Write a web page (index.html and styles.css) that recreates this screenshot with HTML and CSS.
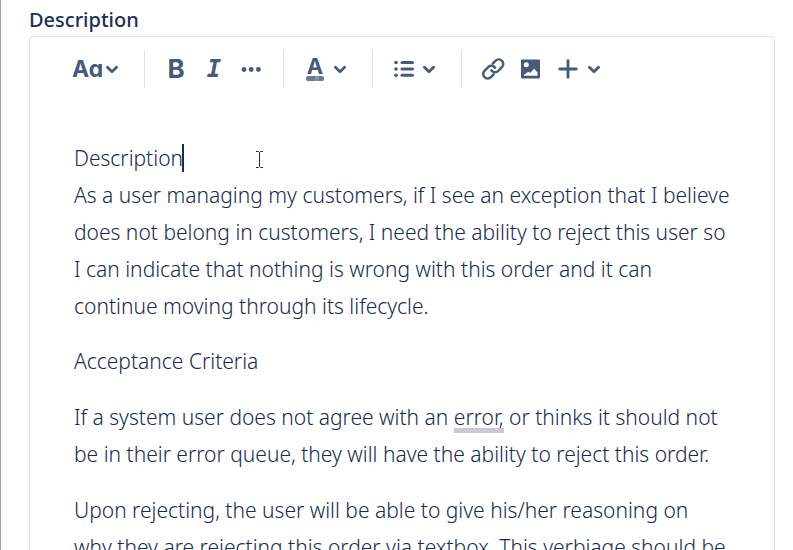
FILE: index.html
```html
<!DOCTYPE html>
<html lang="en">
<head>
<meta charset="utf-8">
<title>Description</title>
<link rel="stylesheet" href="styles.css">
</head>
<body>
<svg class="defs" aria-hidden="true">
  <symbol id="chevron" viewBox="0 0 14 14"><path d="M2.400 5.300 7 9.700l4.600-4.400" fill="none" stroke="currentColor" stroke-width="2.800" stroke-linecap="round" stroke-linejoin="round"/></symbol>
</svg>
<main class="panel">
  <h1 class="label" id="field-label">Description</h1>
  <section class="editor">
    <div class="toolbar" role="toolbar" aria-label="Formatting">
      <div class="group">
        <button class="tool menu styles" type="button" aria-label="Text styles"><span class="glyph aa">Aa</span><svg class="chevron"><use href="#chevron"/></svg></button>
      </div>
      <div class="group">
        <button class="tool" type="button" aria-label="Bold"><span class="glyph bold">B</span></button>
        <button class="tool" type="button" aria-label="Italic"><span class="glyph italic">I</span></button>
        <button class="tool" type="button" aria-label="More formatting"><svg class="icon" viewBox="0 0 24 24" fill="currentColor"><circle cx="4" cy="12.500" r="2.400"/><circle cx="11.200" cy="12.500" r="2.400"/><circle cx="18.400" cy="12.500" r="2.400"/></svg></button>
      </div>
      <div class="group">
        <button class="tool menu" type="button" aria-label="Text color"><span class="color"><span class="glyph letter">A</span><span class="swatch"></span></span><svg class="chevron"><use href="#chevron"/></svg></button>
      </div>
      <div class="group">
        <button class="tool menu" type="button" aria-label="Lists"><svg class="icon" viewBox="0 0 24 24" fill="currentColor"><circle cx="4" cy="5.500" r="1.800"/><circle cx="4" cy="12" r="1.800"/><circle cx="4" cy="18.300" r="1.800"/><rect x="8.500" y="4" width="13.500" height="3" rx="1.500"/><rect x="8.500" y="10.500" width="13.500" height="3" rx="1.500"/><rect x="8.500" y="16.800" width="13.500" height="3" rx="1.500"/></svg><svg class="chevron"><use href="#chevron"/></svg></button>
      </div>
      <div class="group">
        <button class="tool" type="button" aria-label="Link"><svg class="icon" viewBox="0 0 24 24" fill="none" stroke="currentColor" stroke-width="2.500" stroke-linecap="round"><path d="M10.400 13.200a4.400 4.400 0 0 0 6.600.9l3.900-3.900a4.500 4.500 0 0 0-6.400-6.400l-2.700 2.700"/><path d="M14 10.800a4.400 4.400 0 0 0-6.600-.9l-3.900 3.900a4.500 4.500 0 0 0 6.400 6.400l2.700-2.700"/></svg></button>
        <button class="tool" type="button" aria-label="Image"><svg class="icon" viewBox="0 0 24 24"><path fill="currentColor" fill-rule="evenodd" d="M3 2.500h17a1 1 0 0 1 1 1v17a1 1 0 0 1-1 1H3a1 1 0 0 1-1-1v-17a1 1 0 0 1 1-1ZM7.300 5.300a2.500 2.500 0 1 0 0 5a2.500 2.500 0 0 0 0-5ZM5 18.800h13.500v-3.300l-3.300-3.700-4.200 4.300-1.700-1.300L5 17.800Z"/></svg></button>
        <button class="tool menu" type="button" aria-label="Insert"><svg class="icon" viewBox="0 0 24 24" fill="none" stroke="currentColor" stroke-width="2.800" stroke-linecap="round"><path d="M11 3.700v16.600M2.700 12h16.600"/></svg><svg class="chevron"><use href="#chevron"/></svg></button>
      </div>
    </div>
    <div class="content" role="textbox" aria-multiline="true" aria-labelledby="field-label">
      <p>Description<span class="caret"></span><svg class="pointer" viewBox="0 0 9 17" fill="none" stroke="#172b4d"><path d="M1 .5h2.500l1 1 1-1H8M4.500 1.500v14M1 16.500h2.500l1-1 1 1H8"/></svg><br>As a user managing my customers, if I see an exception that I believe<br>does not belong in customers, I need the ability to reject this user so<br>I can indicate that nothing is wrong with this order and it can<br>continue moving through its lifecycle.</p>
      <p>Acceptance Criteria</p>
      <p>If a system user does not agree with an <span class="hint">error,</span> or thinks it should not<br>be in their error queue, they will have the ability to reject this order.</p>
      <p>Upon rejecting, the user will be able to give his/her reasoning on<br>why they are rejecting this order via textbox. This verbiage should be</p>
    </div>
  </section>
</main>
</body>
</html>
```
FILE: styles.css
```css
* { box-sizing: border-box; }

html, body { height: 100%; }

body {
  margin: 0;
  overflow: hidden;
  background: #fefefe;
  color: #172b4d;
  font-family: "Noto Sans", "Open Sans", sans-serif;
}

.defs { position: absolute; width: 0; height: 0; }

.panel {
  min-height: 100%;
  padding: 7px 18px 0 28px;
  border-left: 1px solid #97a0b3;
}

.label {
  margin: 0 0 3px;
  color: #1d3054;
  font-size: 20px;
  font-weight: 500;
  line-height: 26px;
}

.editor {
  border: 1px solid #dfe1e6;
  border-radius: 4px;
}

.toolbar {
  display: flex;
  padding: 13px 24px 0;
}

.group {
  display: flex;
  align-items: center;
  height: 38px;
  padding: 0 12px;
  border-right: 1px solid #dfe1e6;
}

.group:last-child { border-right: 0; }

.tool {
  display: flex;
  align-items: center;
  justify-content: center;
  width: 38px;
  height: 38px;
  padding: 0;
  border: 0;
  background: none;
  color: #475a7a;
}

.tool.menu {
  gap: 6px;
  width: 64px;
  padding: 0 13px 0 7px;
  justify-content: flex-start;
}

.tool.styles {
  gap: 2px;
  width: 66px;
  padding: 0 13px 0 6px;
}

.icon { flex: none; width: 24px; height: 24px; }
.chevron { flex: none; width: 14px; height: 14px; }

.glyph {
  font-family: Inter, "Liberation Sans", sans-serif;
  font-size: 24px;
  font-weight: 700;
  line-height: 24px;
}

.aa {
  font-size: 23px;
  font-feature-settings: "cv11";
}

.bold { font-size: 26px; }

.italic {
  font-family: "DejaVu Sans Mono", monospace;
  font-style: italic;
}

.color {
  display: flex;
  flex-direction: column;
  align-items: center;
  width: 24px;
}

.letter { font-size: 22px; line-height: 19px; }

.swatch {
  width: 18px;
  height: 5px;
  border-radius: 2px;
  background: linear-gradient(90deg, #6b7893 50%, #8993a8 50% 75%, #6b7893 75%);
}

.content {
  padding: 52px 40px 0 44px;
  font-size: 21px;
  font-weight: 300;
  line-height: 37px;
  white-space: nowrap;
}

.content p { margin: 0 0 19px; }

.content p:first-child { margin-bottom: 18px; }

.caret {
  display: inline-block;
  width: 2px;
  height: 28px;
  margin-left: -1px;
  background: #172b4d;
  vertical-align: -6px;
}

.pointer {
  width: 9px;
  height: 17px;
  margin-left: 71px;
  vertical-align: -2px;
}

.hint {
  padding-bottom: 2px;
  background: linear-gradient(#cbc7d3, #cbc7d3) 0 100% / 100% 5px no-repeat;
}
```
